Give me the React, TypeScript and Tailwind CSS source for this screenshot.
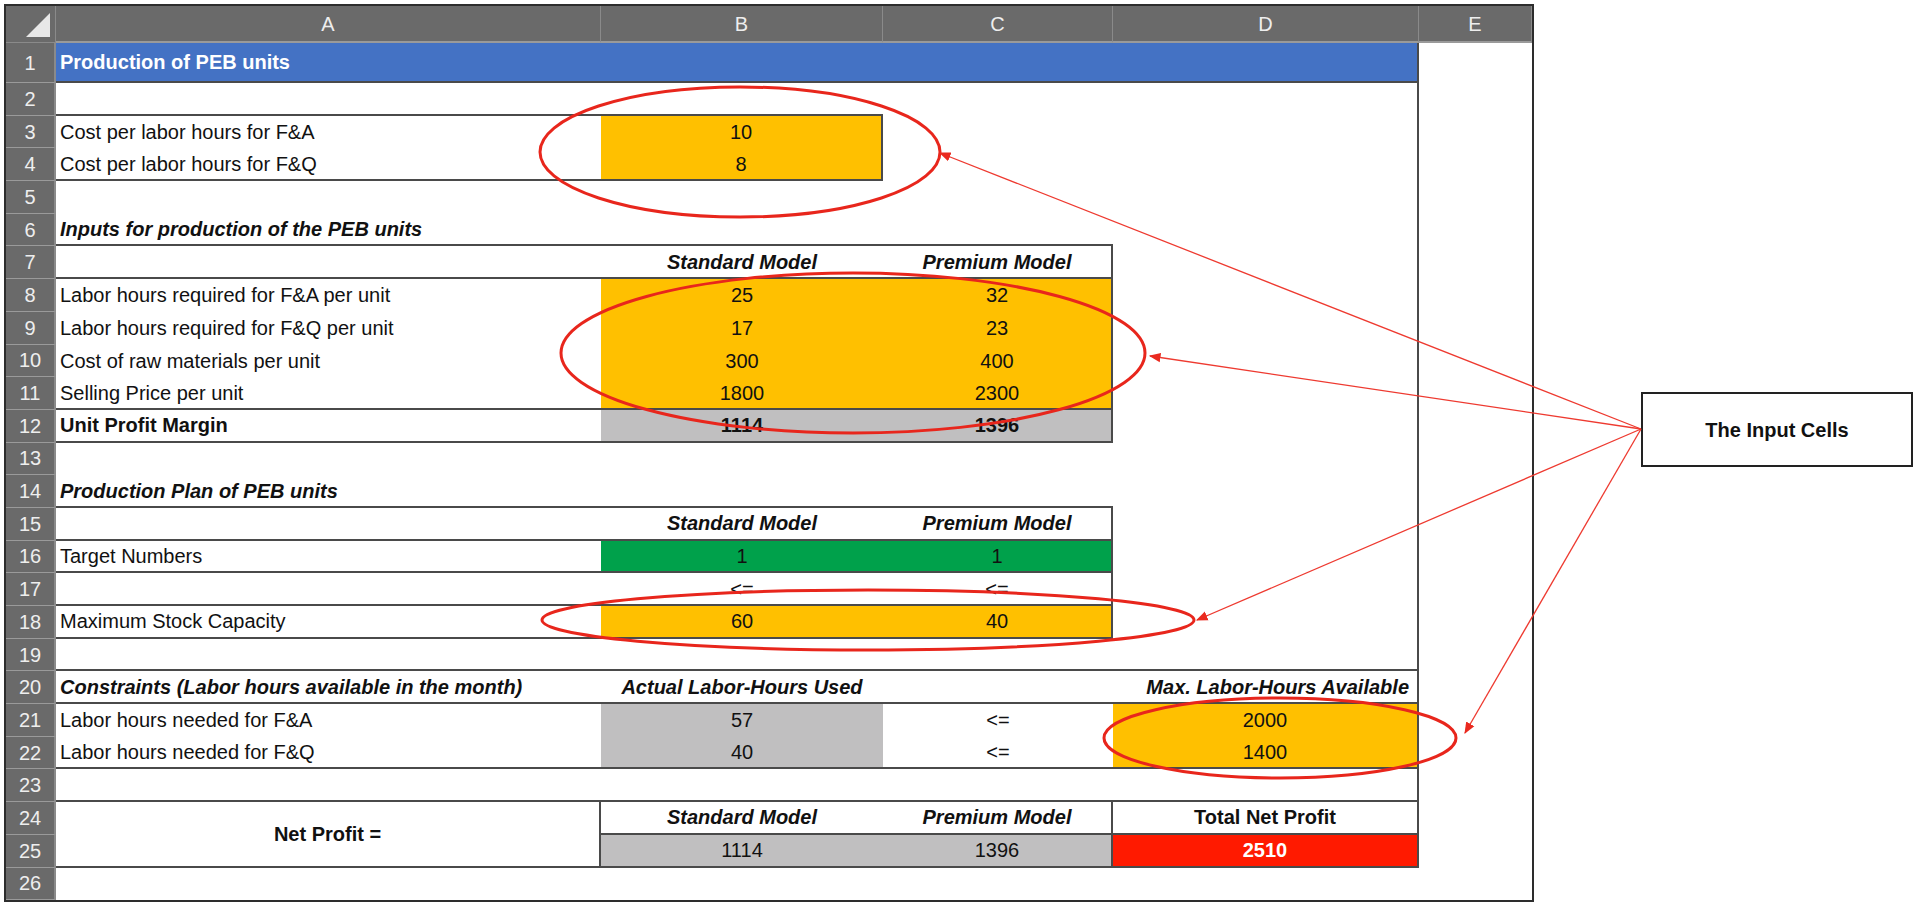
import React from "react";

type Cell = {
  t?: string;
  bg?: string;
  cls?: string;
  b?: boolean;
  r?: boolean;
  span2?: boolean;
};

const ORANGE = "bg-[#ffc000]";
const GRAY = "bg-[#c0bfc0]";
const GREEN = "bg-[#00a14b]";

const hdr = "italic font-bold justify-center";
const num = "justify-center";

// rows 1..26, columns A..E
const rows: (Cell | null)[][] = [
  [
    { t: "Production of PEB units", bg: "bg-[#4472c4]", cls: "text-white font-bold", b: true },
    { bg: "bg-[#4472c4]", b: true },
    { bg: "bg-[#4472c4]", b: true },
    { bg: "bg-[#4472c4]", b: true, r: true },
    {},
  ],
  [{ b: true }, { b: true }, {}, { r: true }, {}],
  [{ t: "Cost per labor hours for F&A" }, { t: "10", bg: ORANGE, cls: num, r: true }, {}, { r: true }, {}],
  [{ t: "Cost per labor hours for F&Q", b: true }, { t: "8", bg: ORANGE, cls: num, b: true, r: true }, {}, { r: true }, {}],
  [{}, {}, {}, { r: true }, {}],
  [{ t: "Inputs for production of the PEB units", cls: "italic font-bold", b: true }, { b: true }, { b: true }, { r: true }, {}],
  [{ b: true }, { t: "Standard Model", cls: hdr, b: true }, { t: "Premium Model", cls: hdr, b: true, r: true }, { r: true }, {}],
  [{ t: "Labor hours required for F&A per unit" }, { t: "25", bg: ORANGE, cls: num }, { t: "32", bg: ORANGE, cls: num, r: true }, { r: true }, {}],
  [{ t: "Labor hours required for F&Q per unit" }, { t: "17", bg: ORANGE, cls: num }, { t: "23", bg: ORANGE, cls: num, r: true }, { r: true }, {}],
  [{ t: "Cost of raw materials per unit" }, { t: "300", bg: ORANGE, cls: num }, { t: "400", bg: ORANGE, cls: num, r: true }, { r: true }, {}],
  [{ t: "Selling Price per unit", b: true }, { t: "1800", bg: ORANGE, cls: num, b: true }, { t: "2300", bg: ORANGE, cls: num, b: true, r: true }, { r: true }, {}],
  [{ t: "Unit Profit Margin", cls: "font-bold", b: true }, { t: "1114", bg: GRAY, cls: "justify-center font-bold", b: true }, { t: "1396", bg: GRAY, cls: "justify-center font-bold", b: true, r: true }, { r: true }, {}],
  [{}, {}, {}, { r: true }, {}],
  [{ t: "Production Plan of PEB units", cls: "italic font-bold", b: true }, { b: true }, { b: true }, { r: true }, {}],
  [{ b: true }, { t: "Standard Model", cls: hdr, b: true }, { t: "Premium Model", cls: hdr, b: true, r: true }, { r: true }, {}],
  [{ t: "Target Numbers", b: true }, { t: "1", bg: GREEN, cls: num, b: true }, { t: "1", bg: GREEN, cls: num, b: true, r: true }, { r: true }, {}],
  [{ b: true }, { t: "<=", cls: num, b: true }, { t: "<=", cls: num, b: true, r: true }, { r: true }, {}],
  [{ t: "Maximum Stock Capacity", b: true }, { t: "60", bg: ORANGE, cls: num, b: true }, { t: "40", bg: ORANGE, cls: num, b: true, r: true }, { r: true }, {}],
  [{ b: true }, { b: true }, { b: true }, { b: true, r: true }, {}],
  [
    { t: "Constraints (Labor hours available in the month)", cls: "italic font-bold", b: true },
    { t: "Actual Labor-Hours Used", cls: hdr, b: true },
    { b: true },
    { t: "Max. Labor-Hours Available", cls: "italic font-bold justify-end pr-2", b: true, r: true },
    {},
  ],
  [{ t: "Labor hours needed for F&A" }, { t: "57", bg: GRAY, cls: num }, { t: "<=", cls: num }, { t: "2000", bg: ORANGE, cls: num, r: true }, {}],
  [{ t: "Labor hours needed for F&Q", b: true }, { t: "40", bg: GRAY, cls: num, b: true }, { t: "<=", cls: num, b: true }, { t: "1400", bg: ORANGE, cls: num, b: true, r: true }, {}],
  [{ b: true }, { b: true }, { b: true }, { b: true, r: true }, {}],
  [
    { t: "Net Profit =", cls: "font-bold justify-center", b: true, r: true, span2: true },
    { t: "Standard Model", cls: hdr, b: true },
    { t: "Premium Model", cls: hdr, b: true, r: true },
    { t: "Total Net Profit", cls: "font-bold justify-center", b: true, r: true },
    {},
  ],
  [null, { t: "1114", bg: GRAY, cls: num, b: true }, { t: "1396", bg: GRAY, cls: num, b: true, r: true }, { t: "2510", bg: "bg-[#ff1a00]", cls: "justify-center font-bold text-white", b: true, r: true }, {}],
  [{}, {}, {}, {}, {}],
];

function SheetCell({ c }: { c: Cell }) {
  return (
    <div
      className={[
        "flex items-center px-[4px] whitespace-nowrap overflow-visible",
        c.bg ?? "bg-white",
        c.b ? "border-b-2 border-b-[#4a4a4a]" : "",
        c.r ? "border-r-2 border-r-[#4a4a4a]" : "",
        c.span2 ? "row-span-2" : "",
        c.cls ?? "",
      ].join(" ")}
    >
      {c.t}
    </div>
  );
}

export default function App() {
  const cols = ["A", "B", "C", "D", "E"];
  return (
    <div
      className="relative w-[1920px] h-[908px] bg-white overflow-hidden text-[20px] text-[#111]"
      style={{ fontFamily: '"Liberation Sans", Arial, sans-serif' }}
    >
      <div className="absolute left-[4px] top-[4px] border-2 border-[#2d2d2d]">
        <div className="grid grid-cols-[50px_545px_282px_230px_306px_113px] grid-rows-[37px_40px_repeat(25,32.7px)]">
          <div className="bg-[#6a6a6a] border-r border-b border-[#8a8a8a] flex items-end justify-end p-[3px]">
            <svg width="30" height="28" viewBox="0 0 30 28">
              <polygon points="28,2 28,26 4,26" fill="#e8e8e8" />
            </svg>
          </div>
          {cols.map((c) => (
            <div
              key={c}
              className="bg-[#6a6a6a] border-r border-b-2 border-r-[#8a8a8a] border-b-[#9a9a9a] text-[#eeeeee] flex items-center justify-center"
            >
              {c}
            </div>
          ))}
          {rows.map((r, i) => (
            <React.Fragment key={i}>
              <div className="bg-[#6a6a6a] border-r-2 border-b border-r-[#8a8a8a] border-b-[#9a9a9a] text-[#eeeeee] flex items-center justify-center">
                {i + 1}
              </div>
              {r.map((c, j) => (c ? <SheetCell key={j} c={c} /> : null))}
            </React.Fragment>
          ))}
        </div>
      </div>

      <div className="absolute left-[1641px] top-[392px] w-[272px] h-[75px] border-2 border-[#222] bg-white flex items-center justify-center font-bold text-[20px]">
        The Input Cells
      </div>

      <svg className="absolute left-0 top-0 pointer-events-none" width="1920" height="908" viewBox="0 0 1920 908">
        <defs>
          <marker id="ah" viewBox="0 0 10 10" refX="9" refY="5" markerWidth="9" markerHeight="9" orient="auto">
            <path d="M0,1 L10,5 L0,9 z" fill="#ea2a1f" />
          </marker>
        </defs>
        <g fill="none" stroke="#e8261c" strokeWidth="3">
          <ellipse cx="740" cy="152" rx="200" ry="65" />
          <ellipse cx="853" cy="353" rx="292" ry="80" />
          <ellipse cx="868" cy="620" rx="326" ry="30" />
          <ellipse cx="1280" cy="738" rx="176" ry="40" />
        </g>
        <g stroke="#ee3a30" strokeWidth="1.3" markerEnd="url(#ah)">
          <line x1="1641" y1="429" x2="940" y2="153" />
          <line x1="1641" y1="429" x2="1150" y2="356" />
          <line x1="1641" y1="429" x2="1197" y2="620" />
          <line x1="1641" y1="429" x2="1465" y2="733" />
        </g>
      </svg>
    </div>
  );
}
